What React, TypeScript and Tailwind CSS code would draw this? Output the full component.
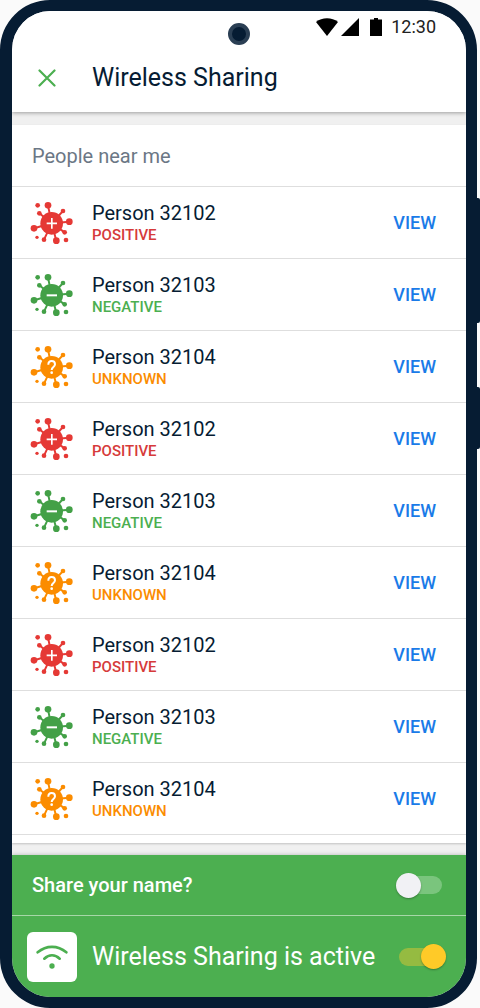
import { useState } from "react";

type Status = "positive" | "negative" | "unknown";

const people: { name: string; status: Status }[] = [
  { name: "Person 32102", status: "positive" },
  { name: "Person 32103", status: "negative" },
  { name: "Person 32104", status: "unknown" },
  { name: "Person 32102", status: "positive" },
  { name: "Person 32103", status: "negative" },
  { name: "Person 32104", status: "unknown" },
  { name: "Person 32102", status: "positive" },
  { name: "Person 32103", status: "negative" },
  { name: "Person 32104", status: "unknown" },
];

const iconColors = {
  positive: "text-[#e53935]",
  negative: "text-[#43a047]",
  unknown: "text-[#fb8c00]",
};

const labelColors = {
  positive: "text-[#d63a3a]",
  negative: "text-[#4caf50]",
  unknown: "text-[#fb8c00]",
};

function VirusIcon({ status }: { status: Status }) {
  return (
    <svg
      className={`h-12 w-12 ${iconColors[status]}`}
      viewBox="0 0 144 144"
      fill="currentColor"
      aria-hidden="true"
    >
      <path
        stroke="currentColor"
        strokeWidth="6"
        d="M71 73L60 19M71 73L105 36M71 73L124 68M71 73L34 43M71 73L18 88M71 73L48 122M71 73L85 125M71 73L110 100"
      />
      <circle cx="71" cy="73" r="34" />
      <circle cx="29" cy="19" r="7" />
      <circle cx="60" cy="19" r="10" />
      <circle cx="105" cy="36" r="7" />
      <circle cx="124" cy="68" r="10" />
      <circle cx="34" cy="43" r="7" />
      <circle cx="18" cy="88" r="10" />
      <circle cx="27" cy="115" r="5" />
      <circle cx="48" cy="122" r="7" />
      <circle cx="85" cy="125" r="10" />
      <circle cx="114" cy="123" r="7" />
      <circle cx="110" cy="100" r="7" />
      {status === "positive" && (
        <path stroke="#fff" strokeWidth="5" d="M56 73h31M71.500 57v32" />
      )}
      {status === "negative" && (
        <path stroke="#fff" strokeWidth="6" d="M56 73h31" />
      )}
      {status === "unknown" && (
        <>
          <path
            fill="none"
            stroke="#fff"
            strokeWidth="6"
            d="M61 65c0-7 4-11 10-11s10 4 10 10c0 8-10 8-10 17"
          />
          <circle cx="71" cy="89" r="4" fill="#fff" />
        </>
      )}
    </svg>
  );
}

function StatusBar() {
  return (
    <div className="flex h-8 items-center justify-end pr-[30px] text-black">
      <svg className="h-[18px] w-[22px]" viewBox="0 0 22 18" aria-hidden="true">
        <path d="M0 4C6-1 16-1 22 4L11 18z" />
      </svg>
      <svg
        className="ml-[3px] h-[18px] w-[18px]"
        viewBox="0 0 18 18"
        aria-hidden="true"
      >
        <path d="M18 0v18H0z" />
      </svg>
      <svg
        className="ml-[11px] h-[18px] w-3"
        viewBox="0 0 12 18"
        aria-hidden="true"
      >
        <path d="M4 0h4v1.500h4V18H0V1.500h4z" />
      </svg>
      <span className="ml-[9px] text-[18px] leading-6 text-[#212121]">
        12:30
      </span>
    </div>
  );
}

function Switch({
  id,
  checked,
  onChange,
}: {
  id: string;
  checked: boolean;
  onChange: (checked: boolean) => void;
}) {
  return (
    <span
      className={`relative flex h-[18px] w-11 items-center rounded-full ${
        checked ? "bg-[#95bb41]" : "bg-[#7ac57d]"
      }`}
    >
      <input
        id={id}
        type="checkbox"
        role="switch"
        checked={checked}
        onChange={(e) => onChange(e.target.checked)}
        className={`absolute h-[25px] w-[25px] cursor-pointer appearance-none rounded-full shadow-[0_1px_2px_rgba(0,0,0,0.3)] ${
          checked ? "-right-[3px] bg-[#ffca28]" : "-left-[2px] bg-[#f1f1f5]"
        }`}
      />
    </span>
  );
}

export default function App() {
  const [shareName, setShareName] = useState(false);
  const [active, setActive] = useState(true);

  return (
    <div className="relative flex min-h-screen bg-[#fafafa] pr-[3px] font-[Roboto,sans-serif] text-[#061c33]">
      <div className="absolute right-0 top-[198px] h-[125px] w-2 rounded-r-xs bg-[#061c33]" />
      <div className="absolute right-0 top-[387px] h-[62px] w-2 rounded-r-xs bg-[#061c33]" />
      <div className="relative flex flex-1 flex-col overflow-hidden rounded-[50px] border-[11px] border-l-[12px] border-[#061c33] bg-[#f0f0f0]">
        <div className="absolute left-1/2 top-3 h-[22px] w-[22px] -translate-x-1/2 rounded-full border-4 border-[#2b3f54] bg-[#061c33]" />

        <header className="bg-white shadow-[0_1px_4px_rgba(0,0,0,0.35)]">
          <StatusBar />
          <div className="flex h-[69px] items-center pl-5">
            <button type="button" aria-label="Close" className="w-[60px]">
              <svg
                className="ml-[6px] h-[18px] w-[18px]"
                viewBox="0 0 18 18"
                fill="none"
                stroke="#4caf50"
                strokeWidth="2.200"
                strokeLinecap="round"
              >
                <path d="M1.500 1.500l15 15M16.500 1.500l-15 15" />
              </svg>
            </button>
            <h1 className="text-[25px] leading-8">Wireless Sharing</h1>
          </div>
        </header>

        <main className="mb-3 mt-[13px] flex-1 bg-white pb-2 shadow-[0_1px_2px_rgba(0,0,0,0.2)]">
          <h2 className="flex h-[62px] items-center border-b border-[#dedede] px-5 text-[20px] text-[#6b7785]">
            People near me
          </h2>
          <ul>
            {people.map((person, i) => (
              <li
                key={i}
                className="flex h-[72px] items-center border-b border-[#dedede] pl-4 pr-[30px]"
              >
                <VirusIcon status={person.status} />
                <div className="ml-4 flex-1">
                  <p className="text-[20px] leading-6">{person.name}</p>
                  <p
                    className={`text-[15px] font-medium uppercase leading-5 ${labelColors[person.status]}`}
                  >
                    {person.status}
                  </p>
                </div>
                <button
                  type="button"
                  className="text-[18px] font-medium text-[#1a7be8]"
                >
                  VIEW
                </button>
              </li>
            ))}
          </ul>
        </main>

        <footer className="bg-[#4caf50] text-white shadow-[0_0_4px_rgba(0,0,0,0.25)]">
          <div className="flex h-[61px] items-center justify-between border-b border-[#a6d7a7] pl-5 pr-6">
            <label htmlFor="share-name" className="text-[20px] font-medium">
              Share your name?
            </label>
            <Switch
              id="share-name"
              checked={shareName}
              onChange={setShareName}
            />
          </div>
          <div className="flex h-[81px] items-center pl-[15px] pr-[23px]">
            <span className="flex h-[50px] w-[50px] items-center justify-center rounded-md bg-white">
              <svg
                className="h-[26px] w-8"
                viewBox="0 0 96 78"
                fill="none"
                stroke="#4caf50"
                strokeWidth="8"
                strokeLinecap="round"
                aria-hidden="true"
              >
                <path d="M5 25C31 3 65 3 91 25M25 44C39 31 57 31 71 44" />
                <circle cx="48" cy="66" r="8" fill="#4caf50" stroke="none" />
              </svg>
            </span>
            <label
              htmlFor="wireless-sharing"
              className="ml-[15px] flex-1 text-[25px] leading-8"
            >
              Wireless Sharing is active
            </label>
            <Switch
              id="wireless-sharing"
              checked={active}
              onChange={setActive}
            />
          </div>
        </footer>
      </div>
    </div>
  );
}
